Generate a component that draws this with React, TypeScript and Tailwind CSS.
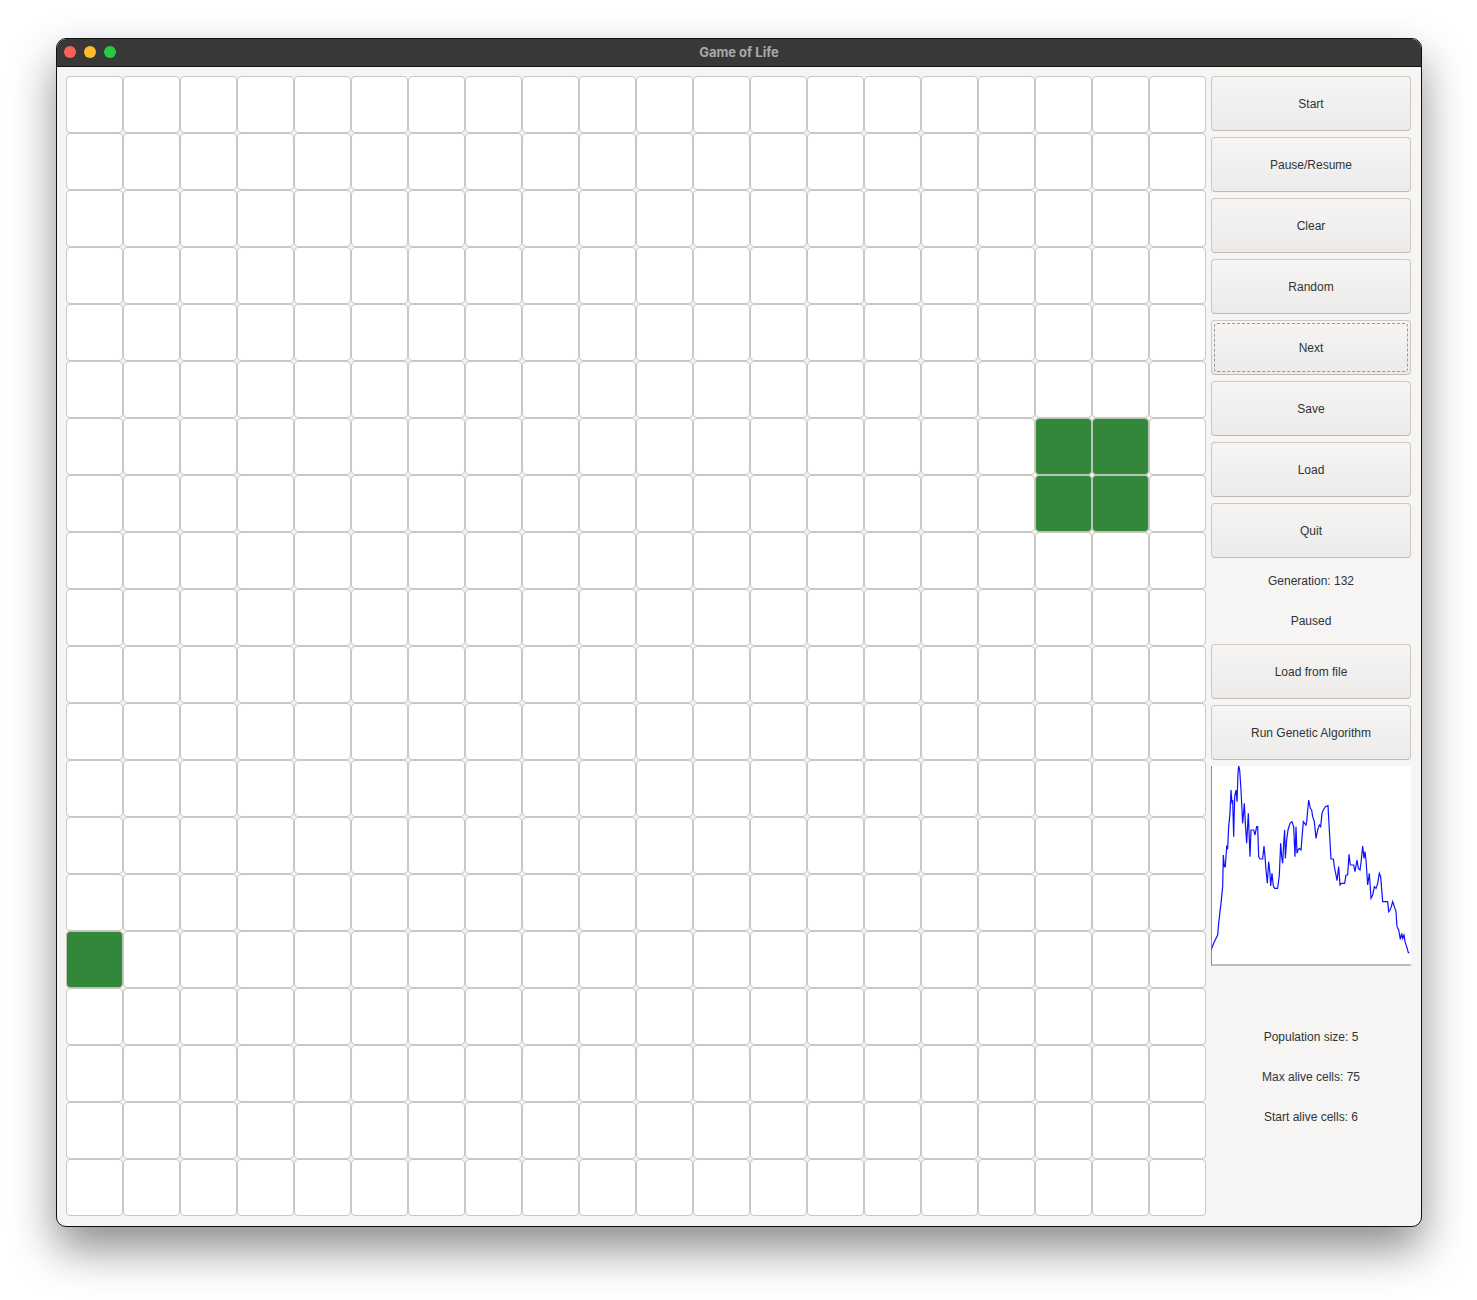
import React from "react";

const COLS = 20;
const ROWS = 20;

// alive cells as "row-col"
const alive = new Set(["6-17", "6-18", "7-17", "7-18", "15-0"]);

const controls = ["Start", "Pause/Resume", "Clear", "Random", "Next", "Save", "Load", "Quit"];

// population history, traced in a 600x600 box
const history: [number, number][] = [
  [35, 570], [45, 545], [55, 525], [58, 490], [62, 455], [65, 430], [70, 380], [72, 285], [75, 320], [78, 320],
  [82, 260], [85, 265], [88, 200], [92, 160], [95, 90], [98, 130], [100, 120], [103, 230], [106, 110], [110, 90],
  [113, 125], [116, 40], [118, 18], [121, 30], [125, 90], [130, 190], [135, 130], [138, 190], [142, 250], [147, 160],
  [152, 290], [155, 210], [160, 210], [163, 210], [167, 225], [172, 200], [175, 200], [178, 290], [182, 297], [190, 297],
  [194, 258], [197, 290], [200, 330], [204, 370], [208, 305], [212, 340], [214, 378], [218, 340], [222, 378], [226, 385],
  [235, 385], [240, 345], [244, 250], [247, 290], [250, 310], [253, 250], [256, 210], [258, 295], [262, 240], [266, 210],
  [272, 190], [278, 185], [283, 200], [287, 290], [290, 200], [293, 280], [296, 270], [300, 265], [305, 270], [312, 185],
  [316, 190], [320, 195], [322, 185], [328, 120], [333, 145], [337, 150], [340, 170], [345, 185], [350, 235], [355, 210],
  [360, 195], [364, 200], [368, 160], [372, 150], [378, 140], [386, 137], [390, 210], [395, 297], [402, 297], [405, 320],
  [410, 345], [413, 362], [418, 320], [422, 375], [426, 370], [436, 370], [440, 345], [445, 345], [449, 283], [453, 315],
  [463, 315], [467, 335], [473, 300], [477, 325], [482, 330], [486, 300], [490, 258], [494, 295], [497, 275], [500, 300],
  [505, 375], [510, 340], [515, 415], [520, 405], [525, 380], [530, 385], [535, 370], [540, 340], [544, 350], [550, 425],
  [565, 425], [568, 455], [572, 450], [576, 440], [580, 425], [585, 440], [590, 455], [593, 500], [598, 510], [603, 538],
  [607, 520], [610, 535], [614, 525], [617, 545], [622, 560], [627, 578], [630, 578],
];

function Cell({ on }: { on: boolean }) {
  return (
    <div
      className={`w-[57px] h-[57px] rounded-[4px] border ${
        on ? "bg-[#33873a] border-[#b9c4b5]" : "bg-white border-[#cbc7c0]"
      }`}
    />
  );
}

function Btn({ label, focused }: { label: string; focused?: boolean }) {
  return (
    <button className="relative h-[55px] w-full rounded-[4px] border border-[#cdc8c2] border-b-[#bfbab3] bg-gradient-to-b from-[#f6f5f4] to-[#edebe9] text-[12px] text-[#2e3436]">
      {focused && (
        <span className="absolute inset-[2px] rounded-[3px] border border-dashed border-[#9a9996] pointer-events-none" />
      )}
      {label}
    </button>
  );
}

function Label({ text }: { text: string }) {
  return <div className="h-[34px] flex items-center justify-center text-[12px] text-[#2e3436]">{text}</div>;
}

function Chart() {
  const pts = history.map(([x, y]) => `${x},${y}`).join(" ");
  return (
    <div className="h-[200px] w-full bg-white">
      <svg width="200" height="200" viewBox="35 18 600 600" className="block">
        <polyline points={pts} fill="none" stroke="#1010ff" strokeWidth="1.2" vectorEffect="non-scaling-stroke" />
        <line x1="36" y1="18" x2="36" y2="615" stroke="#777" strokeWidth="1" vectorEffect="non-scaling-stroke" />
        <line x1="35" y1="615" x2="635" y2="615" stroke="#777" strokeWidth="1" vectorEffect="non-scaling-stroke" />
      </svg>
    </div>
  );
}

export default function App() {
  return (
    <div className="min-h-[1300px] bg-white pt-[38px] pl-[56px] font-['Liberation_Sans',Arial,sans-serif]">
      <div className="w-[1366px] h-[1189px] rounded-[10px] border border-[#111] bg-[#f6f5f4] overflow-hidden shadow-[0_22px_45px_rgba(0,0,0,0.45)] flex flex-col">
        {/* Title bar */}
        <div className="relative h-[28px] shrink-0 bg-[#383838] border-b border-[#111] flex items-center justify-center">
          <div className="absolute left-[7px] top-[7px] flex gap-[8px]">
            <span className="w-[12px] h-[12px] rounded-full bg-[#fe5f57]" />
            <span className="w-[12px] h-[12px] rounded-full bg-[#febc2e]" />
            <span className="w-[12px] h-[12px] rounded-full bg-[#28c840]" />
          </div>
          <span className="font-['Inter',sans-serif] font-bold text-[13px] text-[#a9a9a9]">Game of Life</span>
        </div>

        {/* Content */}
        <div className="flex pl-[9px] pt-[9px] gap-[5px]">
          <div className="grid grid-cols-[repeat(20,57px)] grid-rows-[repeat(20,57px)]">
            {Array.from({ length: ROWS }).map((_, r) =>
              Array.from({ length: COLS }).map((_, c) => <Cell key={`${r}-${c}`} on={alive.has(`${r}-${c}`)} />)
            )}
          </div>

          <div className="w-[200px] flex flex-col gap-[6px]">
            {controls.map((c) => (
              <Btn key={c} label={c} focused={c === "Next"} />
            ))}
            <Label text="Generation: 132" />
            <Label text="Paused" />
            <Btn label="Load from file" />
            <Btn label="Run Genetic Algorithm" />
            <Chart />
            <div className="h-[42px]" />
            <Label text="Population size: 5" />
            <Label text="Max alive cells: 75" />
            <Label text="Start alive cells: 6" />
          </div>
        </div>
      </div>
    </div>
  );
}
